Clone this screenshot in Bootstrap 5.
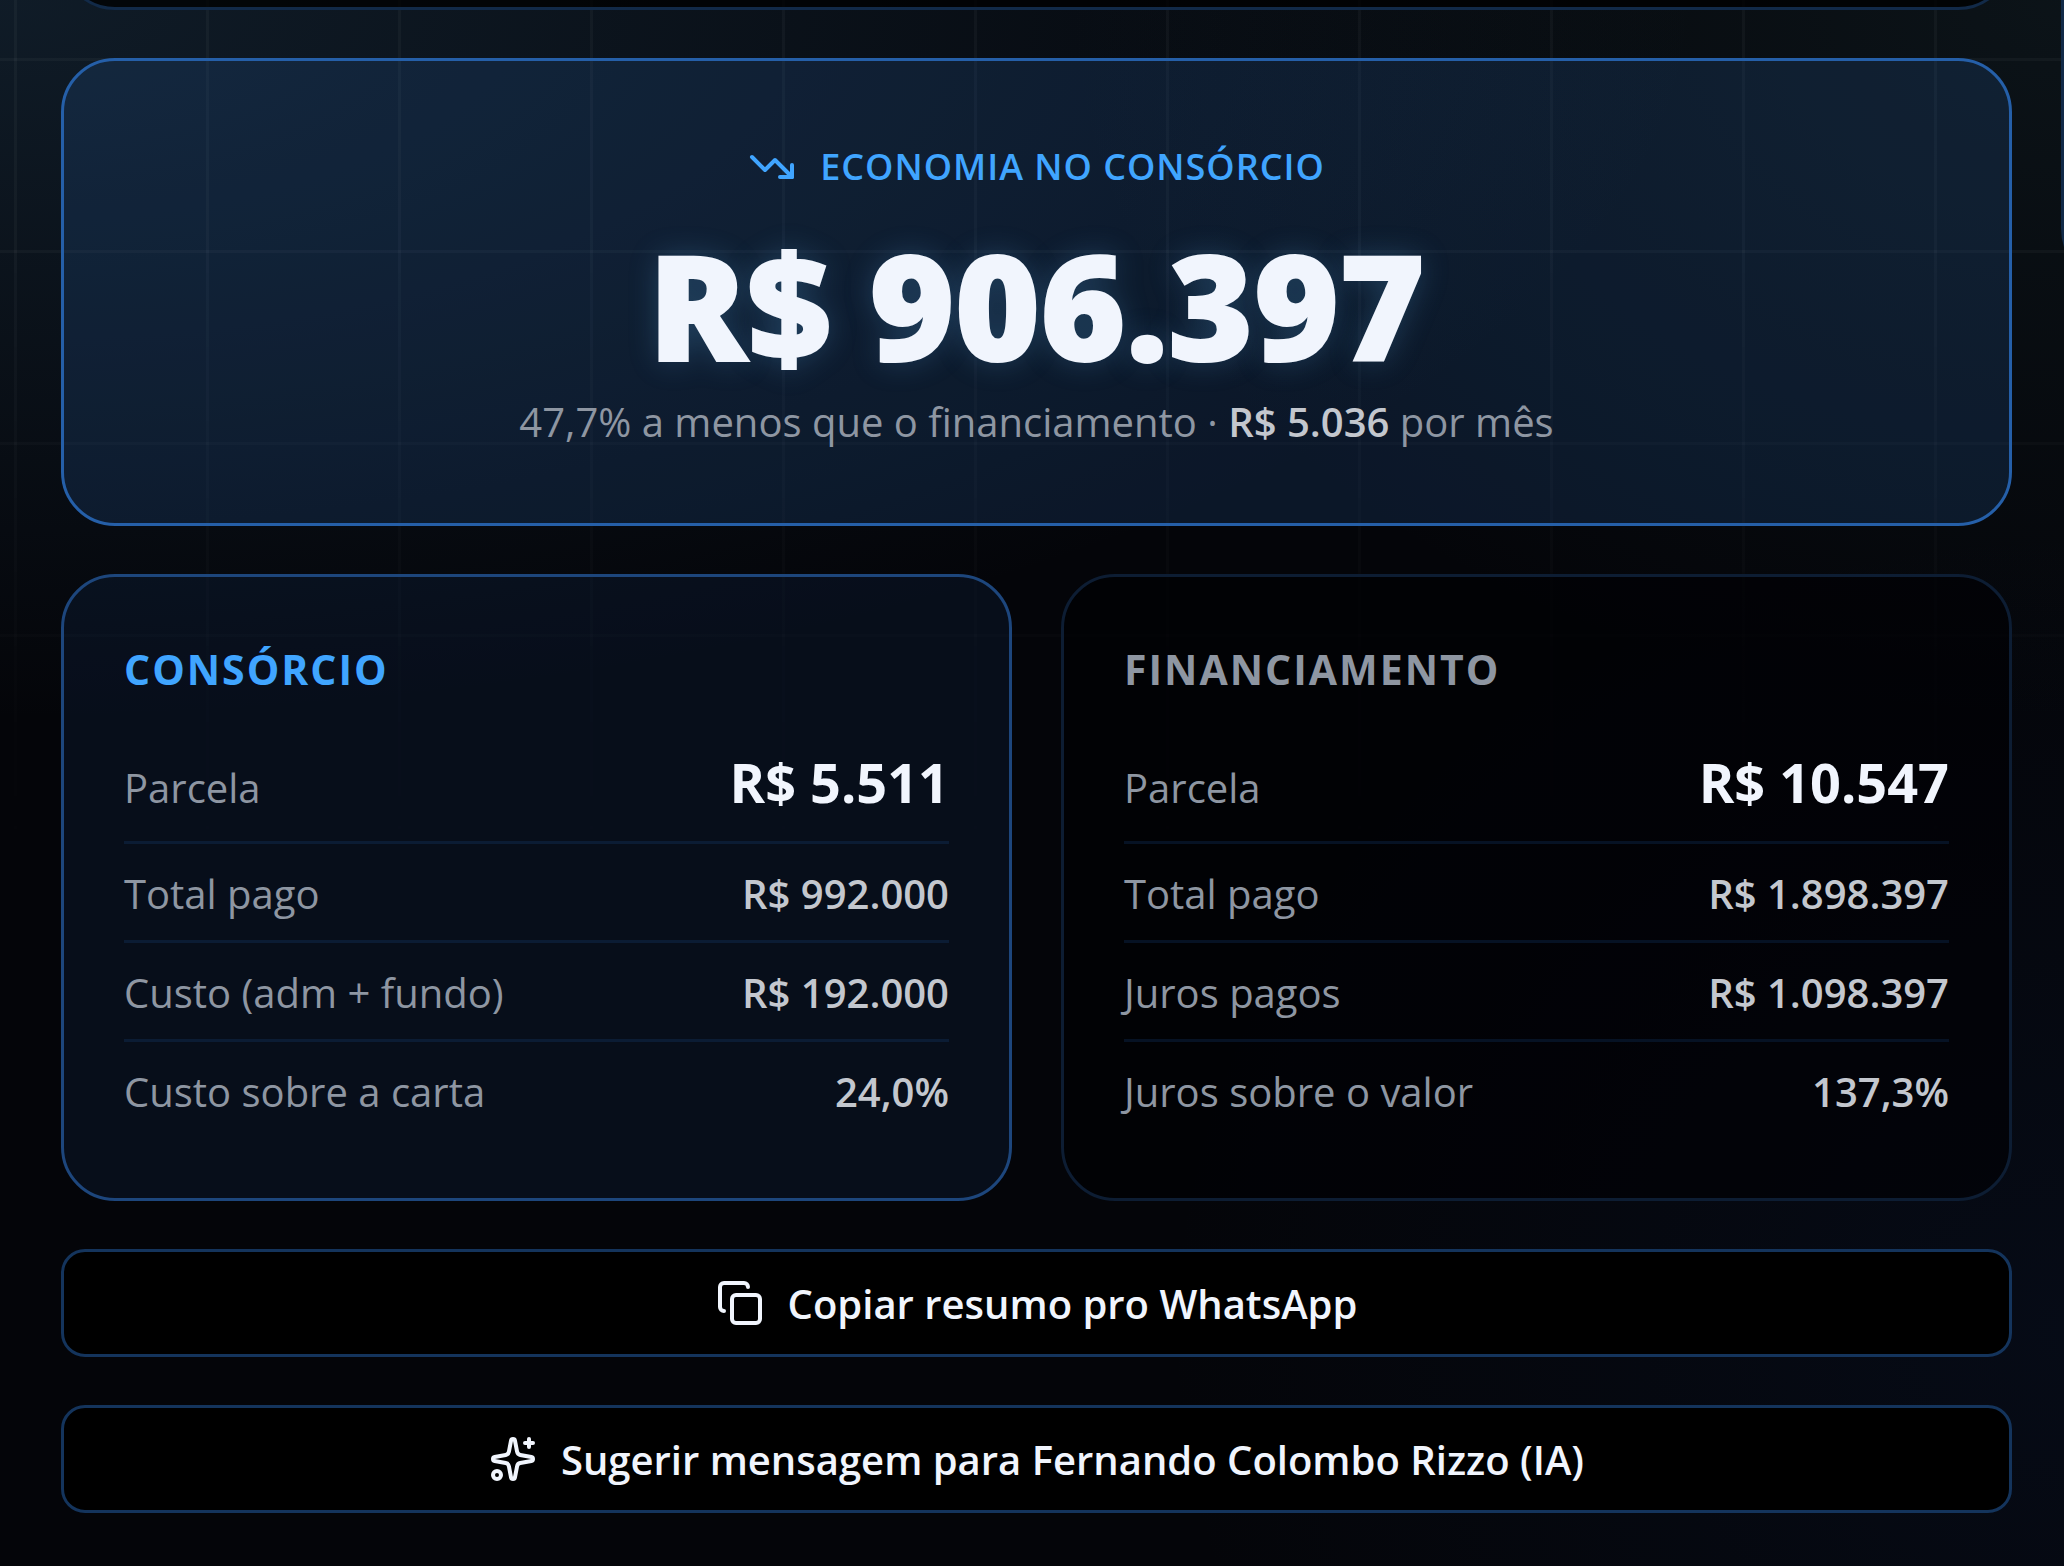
<!DOCTYPE html>
<html lang="pt-BR">
<head>
<meta charset="utf-8">
<meta name="viewport" content="width=device-width, initial-scale=1">
<title>Consórcio x Financiamento</title>
<link href="https://cdn.jsdelivr.net/npm/bootstrap@5.3.0/dist/css/bootstrap.min.css" rel="stylesheet">
<style>
  :root {
    --ink: #f1f5fd;
    --soft: #c3c7ce;
    --muted: #8e96a2;
    --accent: #40a5ff;
  }
  body {
    font-family: "Open Sans", "Noto Sans", sans-serif;
    font-size: 40px;
    line-height: 60px;
    color: var(--ink);
    min-height: 100vh;
    overflow: hidden;
    background:
      radial-gradient(ellipse 1700px 720px at 0 0, rgba(50, 95, 130, .25), transparent),
      radial-gradient(ellipse 1000px 720px at 100% 0, rgba(50, 90, 100, .17), transparent),
      radial-gradient(ellipse 900px 800px at 100% 85%, rgba(20, 50, 110, .13), transparent),
      #040509;
  }
  /* faint square grid that fades out down the page */
  .grid-layer {
    position: absolute;
    inset: 0;
    z-index: -1;
    background:
      linear-gradient(90deg, rgba(255, 255, 255, .035) 3px, transparent 3px) 14px 0 / 192px 192px,
      linear-gradient(rgba(255, 255, 255, .035) 3px, transparent 3px) 0 58px / 192px 192px;
    -webkit-mask-image: linear-gradient(#000 15%, transparent 58%);
    mask-image: linear-gradient(#000 15%, transparent 58%);
  }
  .page { gap: 49px; padding-left: 61px; }
  .stack { gap: 48px; padding-bottom: 53px; min-width: 0; }
  .side { flex: 0 0 3px; min-width: 0; overflow: hidden; }
  .panel {
    border: 3px solid #0d1d33;
    border-radius: 54px;
    background: rgba(0, 0, 3, .6);
  }
  .panel-above { height: 200px; margin-top: -190px; border-color: #122a48; background: rgba(0, 0, 0, .75); }
  .panel-side { width: 951px; height: 483px; margin-top: -200px; border-color: #122a48; }
  .hero { padding: 74px 60px 70px; border-color: #255fa8; background: rgba(42, 97, 165, .2); }
  .hero-label { gap: 24px; font-size: 36px; line-height: 64px; font-weight: 600; letter-spacing: 1px; color: var(--accent); }
  .hero-value {
    margin: 34px 0 14px;
    font-size: 146px;
    line-height: 144px;
    font-weight: 800;
    -webkit-text-stroke: 2px var(--ink);
    text-shadow: 0 0 30px rgba(90, 175, 240, .25);
  }
  .hero-note { line-height: 62px; color: var(--muted); }
  .hero-note strong { font-weight: 600; color: var(--soft); }
  .compare { display: grid; grid-template-columns: 1fr 1fr; gap: 49px; }
  .option { padding: 60px; }
  .option h2 { margin-bottom: 18px; font-size: 41px; line-height: 64px; font-weight: 700; letter-spacing: 2px; color: var(--muted); }
  .featured { border-color: #1d467c; background: rgba(25, 58, 110, .17); }
  .featured h2 { color: var(--accent); }
  .line-item { padding: 20px 0 16px; border-bottom: 3px solid #061224; }
  .featured .line-item { border-color: #0b1c34; }
  .option .line-item:last-child { border-bottom: 0; }
  .line-item dt { font-weight: 400; color: var(--muted); }
  .line-item dd { font-weight: 600; color: var(--soft); }
  .line-item dd.top-value { font-size: 54px; line-height: 86px; font-weight: 700; color: var(--ink); }
  .action {
    gap: 24px;
    height: 108px;
    border: 3px solid #14345c;
    border-radius: 24px;
    background: #000;
    font-weight: 600;
    color: var(--ink);
  }
  .action span { padding-top: 2px; }
  .glyph { width: 48px; height: 48px; flex: none; fill: none; stroke: currentColor; stroke-width: 2; stroke-linecap: round; stroke-linejoin: round; }
</style>
<script src="https://cdn.jsdelivr.net/npm/bootstrap@5.3.0/dist/js/bootstrap.bundle.min.js"></script>
</head>
<body class="position-relative">
<div class="grid-layer"></div>
<div class="page d-flex align-items-start">
  <main class="stack d-flex flex-column flex-grow-1">
    <div class="panel panel-above"></div>

    <section class="panel hero text-center">
      <div class="hero-label d-flex align-items-center justify-content-center">
        <svg class="glyph" viewBox="0 0 24 24" aria-hidden="true"><path d="M16 17h6v-6"/><path d="m22 17-8.500-8.500-5 5L2 7"/></svg>
        <span>ECONOMIA NO CONSÓRCIO</span>
      </div>
      <div class="hero-value">R$ 906.397</div>
      <p class="hero-note mb-0">47,7% a menos que o financiamento · <strong>R$ 5.036</strong> por mês</p>
    </section>

    <div class="compare">
      <section class="panel option featured">
        <h2>CONSÓRCIO</h2>
        <dl class="mb-0">
          <div class="line-item d-flex justify-content-between align-items-baseline"><dt>Parcela</dt><dd class="top-value mb-0">R$ 5.511</dd></div>
          <div class="line-item d-flex justify-content-between align-items-baseline"><dt>Total pago</dt><dd class="mb-0">R$ 992.000</dd></div>
          <div class="line-item d-flex justify-content-between align-items-baseline"><dt>Custo (adm + fundo)</dt><dd class="mb-0">R$ 192.000</dd></div>
          <div class="line-item d-flex justify-content-between align-items-baseline"><dt>Custo sobre a carta</dt><dd class="mb-0">24,0%</dd></div>
        </dl>
      </section>
      <section class="panel option">
        <h2>FINANCIAMENTO</h2>
        <dl class="mb-0">
          <div class="line-item d-flex justify-content-between align-items-baseline"><dt>Parcela</dt><dd class="top-value mb-0">R$ 10.547</dd></div>
          <div class="line-item d-flex justify-content-between align-items-baseline"><dt>Total pago</dt><dd class="mb-0">R$ 1.898.397</dd></div>
          <div class="line-item d-flex justify-content-between align-items-baseline"><dt>Juros pagos</dt><dd class="mb-0">R$ 1.098.397</dd></div>
          <div class="line-item d-flex justify-content-between align-items-baseline"><dt>Juros sobre o valor</dt><dd class="mb-0">137,3%</dd></div>
        </dl>
      </section>
    </div>

    <button type="button" class="action d-flex align-items-center justify-content-center w-100">
      <svg class="glyph" viewBox="0 0 24 24" aria-hidden="true"><rect x="8" y="8" width="14" height="14" rx="2"/><path d="M4 16c-1.100 0-2-.9-2-2V4c0-1.100.9-2 2-2h10c1.100 0 2 .9 2 2"/></svg>
      <span>Copiar resumo pro WhatsApp</span>
    </button>
    <button type="button" class="action d-flex align-items-center justify-content-center w-100">
      <svg class="glyph" viewBox="0 0 24 24" aria-hidden="true"><path d="M11.017 2.814a1 1 0 0 1 1.966 0l1.051 5.558a2 2 0 0 0 1.594 1.594l5.558 1.051a1 1 0 0 1 0 1.966l-5.558 1.051a2 2 0 0 0-1.594 1.594l-1.051 5.558a1 1 0 0 1-1.966 0l-1.051-5.558a2 2 0 0 0-1.594-1.594l-5.558-1.051a1 1 0 0 1 0-1.966l5.558-1.051a2 2 0 0 0 1.594-1.594z"/><path d="M20 2v4M22 4h-4"/><circle cx="4" cy="20" r="2"/></svg>
      <span>Sugerir mensagem para Fernando Colombo Rizzo (IA)</span>
    </button>
  </main>
  <aside class="side">
    <div class="panel panel-side"></div>
  </aside>
</div>
</body>
</html>
